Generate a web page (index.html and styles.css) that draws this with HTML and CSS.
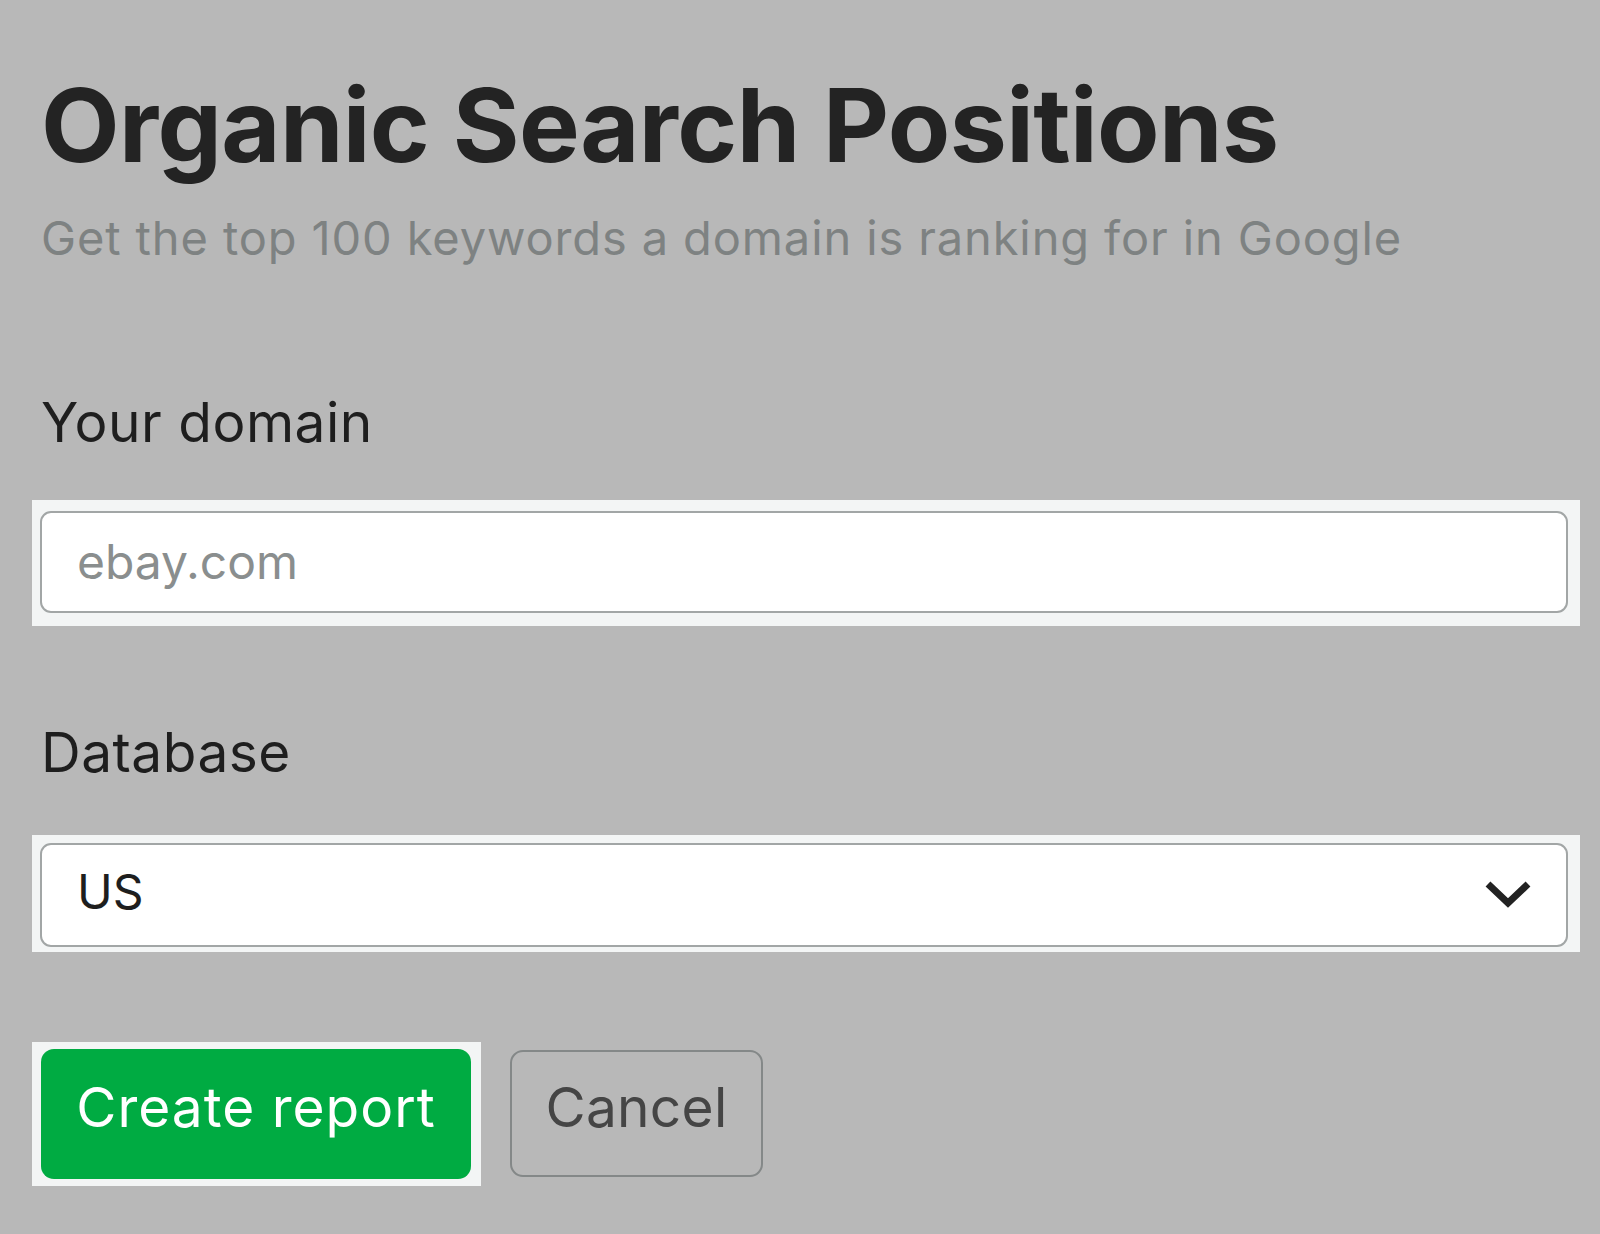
FILE: index.html
```html
<!DOCTYPE html>
<html lang="en">
<head>
<meta charset="utf-8">
<title>Organic Search Positions</title>
<link rel="stylesheet" href="styles.css">
</head>
<body>
<main class="page">
  <h1 class="title">Organic Search Positions</h1>
  <p class="subtitle">Get the top 100 keywords a domain is ranking for in Google</p>

  <label class="label label-domain" for="domain">Your domain</label>
  <div class="hl hl-input">
    <input class="field" id="domain" type="text" placeholder="ebay.com">
  </div>

  <div class="label label-db">Database</div>
  <div class="hl hl-select">
    <div class="field select">
      <span class="select-value">US</span>
      <svg class="chevron" width="46" height="28" viewBox="0 0 46 28" aria-hidden="true">
        <polyline points="3,4 23,23 43,4" fill="none" stroke="#222" stroke-width="7" stroke-linejoin="miter"/>
      </svg>
    </div>
  </div>

  <div class="actions">
    <div class="hl hl-btn">
      <button class="btn btn-primary" type="button">Create report</button>
    </div>
    <button class="btn btn-secondary" type="button">Cancel</button>
  </div>
</main>
</body>
</html>
```

FILE: styles.css
```css
html, body {
  margin: 0;
  padding: 0;
  background: #b8b8b8;
}

body {
  font-family: Inter, "Noto Sans", "DejaVu Sans", sans-serif;
  color: #222222;
  min-height: 1234px;
}

.page {
  padding: 74px 20px 0 32px;
  display: flex;
  flex-direction: column;
  align-items: flex-start;
}

.title {
  margin: 0 0 0 9px;
  font-size: 102px;
  line-height: 102px;
  font-weight: 700;
  letter-spacing: -0.6px;
  color: #232323;
}

.subtitle {
  margin: 38px 0 0 9px;
  font-size: 47px;
  line-height: 47px;
  font-weight: 400;
  letter-spacing: 0.88px;
  color: #7e8282;
}

.label {
  display: block;
  margin-left: 9px;
  font-size: 55px;
  line-height: 55px;
  font-weight: 400;
  letter-spacing: 0.5px;
  color: #1e1e1e;
}

.label-domain {
  margin-top: 134px;
}

.label-db {
  margin-top: 99px;
}

.hl {
  background: #f3f5f5;
  box-sizing: border-box;
}

.hl-input {
  margin-top: 50px;
  width: 1548px;
  padding: 11px 12px 13px 8px;
}

.hl-select {
  margin-top: 55px;
  width: 1548px;
  padding: 8px 12px 5px 8px;
}

.field {
  box-sizing: border-box;
  width: 100%;
  background: #ffffff;
  border: 2px solid #a2a6a6;
  border-radius: 11px;
  font-family: inherit;
  font-size: 48px;
  color: #1e1e1e;
}

input.field {
  display: block;
  height: 102px;
  padding: 0 0 2px 35px;
  outline: none;
}

input.field::placeholder {
  color: #8a8e8e;
  opacity: 1;
}

.select {
  height: 104px;
  display: flex;
  align-items: center;
  justify-content: space-between;
  padding: 0 35px 0 35px;
}

.select-value {
  line-height: 48px;
  margin-top: -6px;
}

.chevron {
  display: block;
  margin-top: -2px;
}

.actions {
  margin-top: 90px;
  display: flex;
  align-items: flex-start;
  gap: 29px;
}

.hl-btn {
  padding: 7px 10px 7px 9px;
}

.btn {
  box-sizing: border-box;
  font-family: inherit;
  font-size: 55px;
  line-height: 55px;
  border-radius: 13px;
  cursor: pointer;
  display: block;
}

.btn-primary {
  width: 430px;
  height: 130px;
  background: #00ab42;
  border: none;
  color: #ffffff;
  letter-spacing: 1px;
  padding: 0 0 14px 0;
}

.btn-secondary {
  margin-top: 8px;
  width: 253px;
  height: 127px;
  background: transparent;
  border: 2px solid #848888;
  color: #454545;
  letter-spacing: 0.3px;
  padding: 0 0 12px 0;
}
```
